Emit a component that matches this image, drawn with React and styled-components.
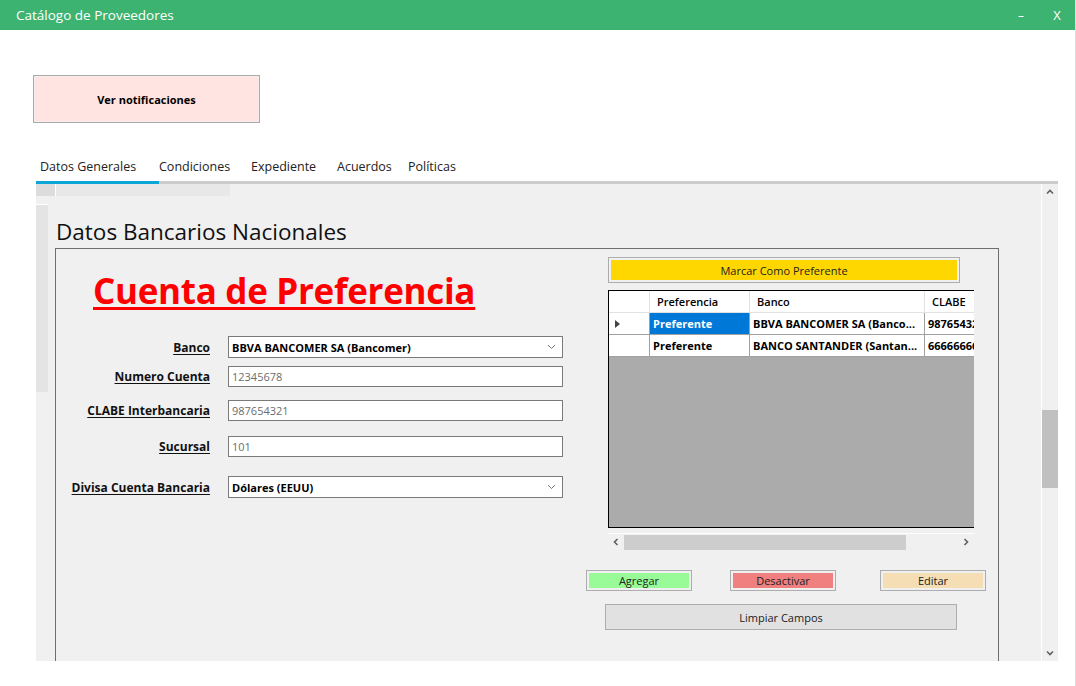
import styled, { createGlobalStyle } from 'styled-components';

const GlobalStyle = createGlobalStyle`
  html, body { margin: 0; padding: 0; background: #fff; }
  body { font-family: 'Open Sans', 'Liberation Sans', sans-serif; overflow: hidden; }
  #root { width: 1076px; height: 686px; }
  * { box-sizing: border-box; }
`;

const Window = styled.div`
  width: 1076px;
  height: 686px;
  display: flex;
  flex-direction: column;
  background: #fff;
  border-right: 1px solid #dedede;
`;

const TitleBar = styled.div`
  height: 30px;
  flex: none;
  display: flex;
  align-items: center;
  background: #3cb371;
  color: #fff;
  padding-left: 16px;
  font-size: 13.5px;
`;

const TitleText = styled.span`
  flex: 1;
`;

const WinButton = styled.span`
  width: 36px;
  text-align: center;
  font-size: ${(p) => (p.close ? '13px' : '12px')};
  color: #fff;
`;

const Content = styled.div`
  flex: 1;
  display: flex;
  flex-direction: column;
  padding-left: 36px;
`;

const NotifyButton = styled.button`
  margin: 45px 0 0 -3px;
  width: 227px;
  height: 48px;
  border: 1px solid #aaa;
  background: #ffe4e1;
  box-shadow: inset 0 0 0 1px #f5eceb;
  font-family: inherit;
  font-size: 11px;
  font-weight: 700;
  color: #000;
`;

const TabStrip = styled.div`
  margin-top: 30px;
  width: 1022px;
  height: 31px;
  display: flex;
  align-items: stretch;
  border-bottom: 3px solid #cccccc;
`;

const Tab = styled.div`
  width: ${(p) => p.w}px;
  padding-left: ${(p) => (p.active ? 4 : 0)}px;
  padding-bottom: 1px;
  display: flex;
  align-items: center;
  font-size: 12.5px;
  color: #222;
  margin-bottom: -3px;
  border-bottom: 3px solid ${(p) => (p.active ? '#0aa6d8' : 'transparent')};
`;

const Panel = styled.div`
  width: 1022px;
  height: 477px;
  background: #f0f0f0;
  display: flex;
`;

const PanelBody = styled.div`
  flex: 1;
  display: flex;
  flex-direction: column;
  overflow: hidden;
`;

const TopGhost = styled.div`
  width: 194px;
  height: 12px;
  flex: none;
  background: linear-gradient(to right, #dcdcdc 0 19px, #fff 19px 20px, #e8e8e8 20px);
`;

const GhostRow = styled.div`
  flex: 1;
  display: flex;
`;

const LeftGhost = styled.div`
  width: 12px;
  height: 188px;
  flex: none;
  background: #e4e4e4;
  border-top: 1px solid #fff;
  margin-top: 8px;
`;

const Main = styled.div`
  flex: 1;
  display: flex;
  flex-direction: column;
  padding-left: 7px;
`;

const SectionTitle = styled.div`
  margin-top: 19px;
  height: 33px;
  line-height: 33px;
  font-size: 22.5px;
  color: #111;
  padding-left: 1px;
  white-space: nowrap;
`;

const GroupBox = styled.div`
  width: 944px;
  flex: 1;
  border: 1px solid #6e6e6e;
  border-bottom: none;
  display: flex;
`;

const LeftCol = styled.div`
  width: 530px;
  display: flex;
  flex-direction: column;
`;

const BigTitle = styled.div`
  margin: 22px 0 0 37px;
  font-size: 35px;
  line-height: 40px;
  font-weight: 700;
  color: #ff0000;
  text-decoration: underline;
  text-underline-offset: 3px;
  text-decoration-thickness: 3px;
  letter-spacing: -0.3px;
  white-space: nowrap;
`;

const FormRow = styled.div`
  display: grid;
  grid-template-columns: 154px 335px;
  column-gap: 18px;
  align-items: center;
  margin-top: ${(p) => p.gap}px;
`;

const Label = styled.span`
  text-align: right;
  font-size: 12px;
  font-weight: 700;
  color: #111;
  text-decoration: underline;
  text-underline-offset: 2px;
  white-space: nowrap;
`;

const Field = styled.div`
  height: ${(p) => (p.combo ? 22 : 21)}px;
  border: 1px solid #7a7a7a;
  background: #fff;
  display: flex;
  align-items: center;
  justify-content: space-between;
  padding: 0 6px 0 3px;
  font-size: 11px;
  font-weight: ${(p) => (p.combo ? 700 : 400)};
  color: ${(p) => (p.combo ? '#000' : '#6d6d6d')};
`;

const RightCol = styled.div`
  flex: 1;
  display: flex;
  flex-direction: column;
`;

const FlatButton = styled.button`
  width: ${(p) => p.w}px;
  height: ${(p) => p.h}px;
  margin-left: ${(p) => p.shift || 0}px;
  border: 1px solid #adadad;
  background: ${(p) => p.bg};
  box-shadow: ${(p) => (p.inset ? 'inset 0 0 0 2px #f0f0f0' : 'none')};
  font-family: inherit;
  font-size: 11px;
  color: #222;
  padding: 0;
`;

const MarkRow = styled.div`
  margin: 8px 0 0 22px;
`;

const GridWrap = styled.div`
  margin: 7px 0 0 22px;
  width: 366px;
  display: flex;
  flex-direction: column;
`;

const GridBox = styled.div`
  height: 238px;
  border: 1px solid #000;
  border-right: none;
  background: #ababab;
  overflow: hidden;
`;

const GridRow = styled.div`
  display: grid;
  grid-template-columns: 41px 100px 175px 140px;
  height: 22px;
`;

const Cell = styled.div`
  background: ${(p) => (p.selected ? '#0078d7' : '#fff')};
  color: ${(p) => (p.selected ? '#fff' : '#000')};
  border-right: 1px solid ${(p) => (p.head ? '#e2e2e2' : '#a0a0a0')};
  border-bottom: 1px solid ${(p) => (p.head ? '#e2e2e2' : '#a0a0a0')};
  font-size: 11px;
  font-weight: ${(p) => (p.head ? 600 : 700)};
  padding-left: ${(p) => (p.head ? 7 : 3)}px;
  display: flex;
  align-items: center;
  white-space: nowrap;
  overflow: hidden;
`;

const RowMarker = styled.div`
  width: 0;
  height: 0;
  margin-left: 3px;
  border-top: 4px solid transparent;
  border-bottom: 4px solid transparent;
  border-left: 5px solid #444;
`;

const HScroll = styled.div`
  margin-top: 5px;
  height: 17px;
  border-top: 1px solid #fff;
  display: flex;
  align-items: center;
`;

const ScrollArrow = styled.span`
  width: 16px;
  height: 16px;
  display: flex;
  align-items: center;
  justify-content: center;
  flex: none;
`;

const HThumb = styled.div`
  width: ${(p) => p.size}px;
  height: 15px;
  background: #cdcdcd;
`;

const HTrack = styled.div`
  flex: 1;
  display: flex;
`;

const ActionRow = styled.div`
  margin-top: 20px;
  width: 400px;
  display: flex;
  gap: 38px;
`;

const ClearRow = styled.div`
  margin: 13px 0 0 19px;
`;

const VScroll = styled.div`
  width: 17px;
  border-left: 1px solid #fff;
  display: flex;
  flex-direction: column;
  align-items: center;
`;

const VTrack = styled.div`
  flex: 1;
  width: 100%;
`;

const VThumb = styled.div`
  margin-top: ${(p) => p.offset}px;
  height: ${(p) => p.size}px;
  background: #c0c0c0;
  width: 100%;
`;

const Chevron = ({ dir }) => {
  const pts = {
    down: '1,1 4,4 7,1',
    up: '1,4 4,1 7,4',
    left: '4,1 1,4 4,7',
    right: '1,1 4,4 1,7',
  }[dir];
  const horiz = dir === 'left' || dir === 'right';
  return (
    <svg width={horiz ? 6 : 8} height={horiz ? 8 : 6} viewBox={horiz ? '0 0 5 8' : '0 0 8 5'}>
      <polyline points={pts} fill="none" stroke="#606060" strokeWidth="1.6" />
    </svg>
  );
};

const ComboArrow = () => (
  <svg width="9" height="6" viewBox="0 0 9 6">
    <polyline points="1,1 4.5,4.5 8,1" fill="none" stroke="#777" strokeWidth="1" />
  </svg>
);

const fields = [
  { label: 'Banco', value: 'BBVA BANCOMER SA (Bancomer)', combo: true, gap: 25 },
  { label: 'Numero Cuenta', value: '12345678', gap: 8 },
  { label: 'CLABE Interbancaria', value: '987654321', gap: 13 },
  { label: 'Sucursal', value: '101', gap: 15 },
  { label: 'Divisa Cuenta Bancaria', value: 'Dólares (EEUU)', combo: true, gap: 19 },
];

const rows = [
  { pref: 'Preferente', banco: 'BBVA BANCOMER SA (Banco...', clabe: '987654321', current: true },
  { pref: 'Preferente', banco: 'BANCO SANTANDER (Santan...', clabe: '666666666' },
];

const tabs = [
  { name: 'Datos Generales', w: 123 },
  { name: 'Condiciones', w: 92 },
  { name: 'Expediente', w: 86 },
  { name: 'Acuerdos', w: 71 },
  { name: 'Políticas', w: 60 },
];

export default function App() {
  return (
    <Window>
      <GlobalStyle />
      <TitleBar>
        <TitleText>Catálogo de Proveedores</TitleText>
        <WinButton>–</WinButton>
        <WinButton close>X</WinButton>
      </TitleBar>
      <Content>
        <NotifyButton>Ver notificaciones</NotifyButton>
        <TabStrip>
          {tabs.map((t, i) => (
            <Tab key={t.name} w={t.w} active={i === 0}>
              {t.name}
            </Tab>
          ))}
        </TabStrip>
        <Panel>
          <PanelBody>
            <TopGhost />
            <GhostRow>
              <LeftGhost />
              <Main>
                <SectionTitle>Datos Bancarios Nacionales</SectionTitle>
                <GroupBox>
                  <LeftCol>
                    <BigTitle>Cuenta de Preferencia</BigTitle>
                    {fields.map((f) => (
                      <FormRow key={f.label} gap={f.gap}>
                        <Label>{f.label}</Label>
                        <Field combo={f.combo}>
                          <span>{f.value}</span>
                          {f.combo && <ComboArrow />}
                        </Field>
                      </FormRow>
                    ))}
                  </LeftCol>
                  <RightCol>
                    <MarkRow>
                      <FlatButton w={352} h={26} bg="#ffd700" inset>
                        Marcar Como Preferente
                      </FlatButton>
                    </MarkRow>
                    <GridWrap>
                      <GridBox>
                        <GridRow>
                          <Cell head />
                          <Cell head>Preferencia</Cell>
                          <Cell head>Banco</Cell>
                          <Cell head>CLABE</Cell>
                        </GridRow>
                        {rows.map((r) => (
                          <GridRow key={r.banco}>
                            <Cell>{r.current && <RowMarker />}</Cell>
                            <Cell selected={r.current}>{r.pref}</Cell>
                            <Cell>{r.banco}</Cell>
                            <Cell>{r.clabe}</Cell>
                          </GridRow>
                        ))}
                      </GridBox>
                      <HScroll>
                        <ScrollArrow>
                          <Chevron dir="left" />
                        </ScrollArrow>
                        <HTrack>
                          <HThumb size={282} />
                        </HTrack>
                        <ScrollArrow>
                          <Chevron dir="right" />
                        </ScrollArrow>
                      </HScroll>
                    </GridWrap>
                    <ActionRow>
                      <FlatButton w={106} h={21} bg="#98fb98" inset>
                        Agregar
                      </FlatButton>
                      <FlatButton w={106} h={21} bg="#f08080" inset>
                        Desactivar
                      </FlatButton>
                      <FlatButton w={106} h={21} bg="#f5deb3" inset shift={6}>
                        Editar
                      </FlatButton>
                    </ActionRow>
                    <ClearRow>
                      <FlatButton w={352} h={26} bg="#e1e1e1">
                        Limpiar Campos
                      </FlatButton>
                    </ClearRow>
                  </RightCol>
                </GroupBox>
              </Main>
            </GhostRow>
          </PanelBody>
          <VScroll>
            <ScrollArrow>
              <Chevron dir="up" />
            </ScrollArrow>
            <VTrack>
              <VThumb offset={210} size={78} />
            </VTrack>
            <ScrollArrow>
              <Chevron dir="down" />
            </ScrollArrow>
          </VScroll>
        </Panel>
      </Content>
    </Window>
  );
}
